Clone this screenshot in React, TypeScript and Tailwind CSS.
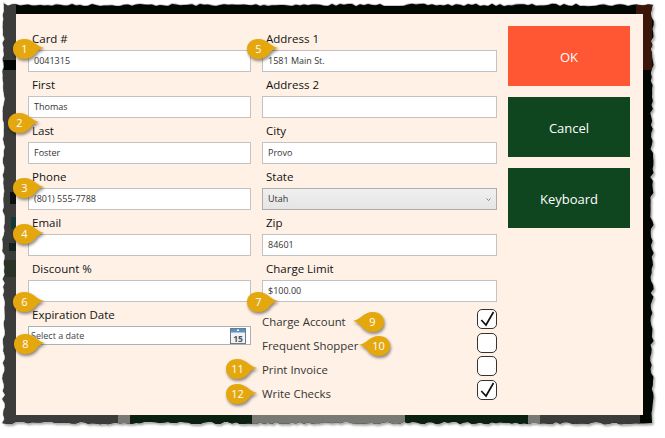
import type { ReactNode } from "react"

const font = "font-['Open_Sans','Noto_Sans',sans-serif]"
const labelCls = "h-[24px] pl-[4px] pt-[1px] text-[11.5px] leading-[24px] font-medium text-[#111]"

// rough torn paper edge around the screenshot
function tornEdge() {
  let seed = 7
  const rnd = () => {
    seed = (seed * 16807) % 2147483647
    return seed / 2147483647 - 0.5
  }
  const pts: string[] = []
  for (let x = 4; x < 652; x += 4) pts.push(`${x} ${(5 + rnd() * 2.5).toFixed(1)}`)
  for (let y = 5; y < 423; y += 4) pts.push(`${(652 + rnd() * 3.5).toFixed(1)} ${y}`)
  for (let x = 652; x > 4; x -= 4) pts.push(`${x} ${(423 + rnd() * 2.5).toFixed(1)}`)
  for (let y = 423; y > 5; y -= 4) pts.push(`${(4 + rnd() * 3).toFixed(1)} ${y}`)
  return `M${pts.join(" L")} Z`
}

const edge = tornEdge()

function Field({ label, value }: { label: string; value?: string }) {
  return (
    <div>
      <div className={labelCls}>{label}</div>
      <div className="h-[22px] border border-[#c2c2c2] bg-white pl-[5px] text-[9px] leading-[20px] text-[#333]">{value}</div>
    </div>
  )
}

function CheckRow({ label, checked }: { label: string; checked?: boolean }) {
  return (
    <div className="flex h-[20px] items-center justify-between">
      <span className="pt-[6px] text-[11.4px] text-[#333]">{label}</span>
      <div className="h-[20px] w-[20px] rounded-[5px] border border-[#333] bg-white">
        {checked && (
          <svg width="18" height="18" viewBox="0 0 18 18">
            <path d="M3.3 10 L8 15 L15.5 2" fill="none" stroke="#111" strokeWidth="1.7" />
          </svg>
        )}
      </div>
    </div>
  )
}

function Callout({ n, left, top, flip }: { n: number; left: number; top: number; flip?: boolean }) {
  return (
    <div className="absolute h-[20px] w-[31px]" style={{ left, top }}>
      <svg width="31" height="20" viewBox="0 0 31 20" className="absolute left-0 top-0 overflow-visible [filter:drop-shadow(1px_2px_1.5px_rgba(0,0,0,0.45))]">
        <g transform={flip ? "translate(31 0) scale(-1 1)" : undefined}>
          <path
            d="M11 0 C16 0 20 2 23 5 C25.5 7 28 8 31 9 C27 10 24.5 11.5 23 14 C20 18 16 20 11 20 C4 20 0 15.5 0 10 C0 4.5 4 0 11 0Z"
            fill="#e5a70e"
          />
        </g>
      </svg>
      <span className={`absolute top-0 w-[23px] text-center text-[11px] leading-[20px] text-white ${flip ? "left-[8px]" : "left-0"}`}>
        {n}
      </span>
    </div>
  )
}

function ActionButton({ color, children }: { color: string; children: ReactNode }) {
  return <button className={`h-[60px] w-[122px] pt-[3px] text-[13px] text-white ${color}`}>{children}</button>
}

function CalendarIcon() {
  return (
    <svg width="16" height="16" viewBox="0 0 16 16">
      <rect x="0.5" y="0.5" width="15" height="15" fill="#f2f2f2" stroke="#6f7a85" />
      <rect x="1" y="1" width="14" height="3.5" fill="#5b8fc9" />
      <rect x="7" y="1.5" width="2" height="1.5" fill="#fff" />
      <text x="8" y="13.5" textAnchor="middle" fontSize="8.5" fontWeight="700" fill="#46525c">15</text>
    </svg>
  )
}

export default function App() {
  return (
    <div className={`relative h-[438px] w-[665px] overflow-hidden bg-white ${font}`}>
      <svg className="absolute left-0 top-0" width="665" height="438" viewBox="0 0 665 438">
        <defs>
          <filter id="soft">
            <feGaussianBlur stdDeviation="1.2" />
          </filter>
        </defs>
        <path d={edge} fill="#a0a0a0" filter="url(#soft)" transform="translate(1.5 2)" />
        <path d={edge} fill="none" stroke="#b8b8b8" strokeWidth="1.6" />
      </svg>

      <div className="relative h-[438px] w-[665px] bg-[#020702] pl-[16px] pt-[14px]" style={{ clipPath: `path('${edge}')` }}>
        {/* app behind the dialog */}
        <div className="absolute left-0 top-0 h-[60px] w-[16px] bg-[#3c3c3a]" />
        <div className="absolute left-0 top-[70px] flex h-[358px] w-[16px] flex-col items-end bg-[#3c3c3a]">
          <div className="mt-[122px] h-[12px] w-[6px] bg-[#0c0f0c]" />
          <div className="mt-[13px] h-[12px] w-[5px] bg-[#123a35]" />
          <div className="mt-[14px] h-[8px] w-[7px] bg-[#10231f]" />
          <div className="mt-[9px] h-[17px] w-[12px] bg-[#2a3326]" />
        </div>
        <div className="absolute right-[13px] top-0 h-[70px] w-[16px] bg-[#3a1708]" />
        <div className="absolute left-0 top-[415px] flex h-[23px] w-[640px] pl-[16px]">
          <div className="w-[102px] bg-[#3c3c3a]" />
          <div className="w-[12px] bg-[#7a7a75]" />
          <div className="w-[122px] bg-[#0a2010]" />
          <div className="w-[153px] bg-[#7a7a75]" />
          <div className="w-[123px] bg-[#0a2010]" />
          <div className="w-[12px] bg-[#7a7a75]" />
          <div className="w-[100px] bg-[#3c3c3a]" />
        </div>

        {/* dialog */}
        <div className="relative flex h-[401px] w-[627px] bg-[#fff1e6] pl-[12px] pt-[12px]">
          <div className="grid w-[469px] grid-cols-[223px_235px] content-start gap-x-[11px]">
            <div>
              <Field label="Card #" value="0041315" />
              <Field label="First" value="Thomas" />
              <Field label="Last" value="Foster" />
              <Field label="Phone" value="(801) 555-7788" />
              <Field label="Email" />
              <Field label="Discount %" />
              <div className={labelCls}>Expiration Date</div>
              <div className="flex h-[19px] items-center justify-between border border-[#a9b3b5] bg-white pl-[2px] pr-[4px] text-[9px] text-[#444]">
                <span>Select a date</span>
                <CalendarIcon />
              </div>
            </div>
            <div>
              <Field label="Address 1" value="1581 Main St." />
              <Field label="Address 2" />
              <Field label="City" value="Provo" />
              <div>
                <div className={labelCls}>State</div>
                <div className="flex h-[22px] items-center justify-between border border-[#adadad] bg-gradient-to-b from-[#f0f0f0] to-[#e5e5e5] pl-[5px] pr-[5px] text-[9px] text-[#333]">
                  <span>Utah</span>
                  <svg width="5" height="3" viewBox="0 0 5 3">
                    <path d="M0.5 0.5 L2.5 2.5 L4.5 0.5" fill="none" stroke="#777" strokeWidth="0.9" />
                  </svg>
                </div>
              </div>
              <Field label="Zip" value="84601" />
              <Field label="Charge Limit" value="$100.00" />
              <div className="mt-[7px] flex flex-col gap-[3.7px]">
                <CheckRow label="Charge Account" checked />
                <CheckRow label="Frequent Shopper" />
                <CheckRow label="Print Invoice" />
                <CheckRow label="Write Checks" checked />
              </div>
            </div>
          </div>
          <div className="ml-[11px] flex flex-col gap-[11px]">
            <ActionButton color="bg-[#ff5733]">OK</ActionButton>
            <ActionButton color="bg-[#0f4620]">Cancel</ActionButton>
            <ActionButton color="bg-[#0f4620]">Keyboard</ActionButton>
          </div>
        </div>
      </div>

      <Callout n={1} left={13} top={39} />
      <Callout n={2} left={8} top={113} />
      <Callout n={3} left={13} top={178} />
      <Callout n={4} left={13} top={224} />
      <Callout n={5} left={247} top={39} />
      <Callout n={6} left={13} top={292} />
      <Callout n={7} left={247} top={292} />
      <Callout n={8} left={14} top={334} />
      <Callout n={9} left={353} top={312} flip />
      <Callout n={10} left={359} top={336} flip />
      <Callout n={11} left={226} top={359} />
      <Callout n={12} left={226} top={384} />
    </div>
  )
}
